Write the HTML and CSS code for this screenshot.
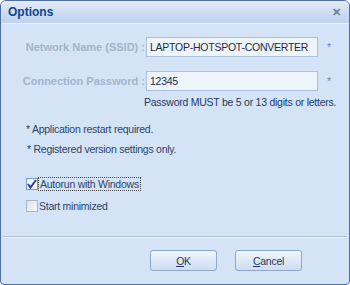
FILE: index.html
```html
<!DOCTYPE html>
<html lang="en">
<head>
    <meta charset="UTF-8">
    <title>Options</title>
    <link rel="stylesheet" href="styles.css">
</head>
<body>
  <div class="window">
    <div class="titlebar">
      <span class="title">Options</span>
      <span class="close">&#x2715;</span>
    </div>
    <div class="content">
      <div class="fields">
        <label class="lbl" for="ssid">Network Name (SSID) :</label>
        <input class="txt" id="ssid" type="text" value="LAPTOP-HOTSPOT-CONVERTER">
        <span class="req">*</span>
        <label class="lbl" for="pass">Connection Password :</label>
        <input class="txt" id="pass" type="text" value="12345">
        <span class="req">*</span>
      </div>
      <p class="hint">Password MUST be 5 or 13 digits or letters.</p>
      <p class="note first">* Application restart required.</p>
      <p class="note second">* Registered version settings only.</p>
      <div class="checks">
        <label class="chk">
          <span class="box checked"><svg width="10" height="10" viewBox="0 0 10 10"><path d="M1 5 L3.5 8.5 L9 1" fill="none" stroke="#2140b0" stroke-width="2"/></svg></span>
          <span class="focus">Autorun with Windows</span>
        </label>
        <label class="chk"><span class="box"></span><span>Start minimized</span></label>
      </div>
      <div class="sep"></div>
      <div class="buttons">
        <button class="btn"><u>O</u>K</button>
        <button class="btn"><u>C</u>ancel</button>
      </div>
    </div>
  </div>
</body>
</html>
```

FILE: styles.css
```css
body{
  margin: 0;
  width: 350px;
  height: 285px;
  background: #ffffff;
  font-family: "Liberation Sans", Arial, sans-serif;
  font-size: 10.5px;
  letter-spacing: -0.25px;
}
.window{
  box-sizing: border-box;
  width: 350px;
  height: 285px;
  border: 1px solid #4d6fa3;
  border-radius: 6px 6px 4px 4px;
  background: #d5e3f7;
  overflow: hidden;
  display: flex;
  flex-direction: column;
}
.titlebar{
  height: 22px;
  display: flex;
  align-items: center;
  justify-content: space-between;
  padding: 0 8px 0 7px;
  background: linear-gradient(#e3ecf8, #c9dbf1 60%, #bfd4ef);
  border-bottom: 1px solid #e8f0fb;
}
.title{
  font-weight: bold;
  font-size: 12px;
  letter-spacing: 0;
  color: #15428b;
}
.close{
  color: #6f7f98;
  font-size: 11px;
  font-weight: bold;
}
.content{
  flex: 1;
  display: flex;
  flex-direction: column;
  padding-top: 13px;
}
.fields{
  display: grid;
  grid-template-columns: 145px 172px auto;
  row-gap: 14px;
  align-items: center;
}
.lbl{
  text-align: right;
  font-weight: bold;
  font-size: 11px;
  letter-spacing: 0;
  color: #a3b4cc;
  padding-right: 1px;
  white-space: nowrap;
}
.txt{
  box-sizing: border-box;
  height: 20px;
  width: 172px;
  border: 1px solid #abc1de;
  background: #eef4fc;
  font-family: inherit;
  font-size: 10.5px;
  letter-spacing: -0.25px;
  color: #1e2c44;
  padding: 0 3px;
  margin: 0;
}
.req{
  padding-left: 9px;
  color: #6e86aa;
}
.hint{
  margin: 5px 0 0 143px;
  color: #1e3a66;
  white-space: nowrap;
}
.note{
  margin: 0;
  color: #2b4468;
}
.first{
  margin: 15px 0 0 25px;
}
.second{
  margin: 8px 0 0 26px;
}
.checks{
  margin: 23px 0 0 25px;
  display: flex;
  flex-direction: column;
  gap: 10px;
}
.chk{
  display: flex;
  align-items: center;
  gap: 1px;
  color: #2b4468;
}
.box{
  box-sizing: border-box;
  width: 12px;
  height: 12px;
  border: 1px solid #a7b6ca;
  background: linear-gradient(135deg, #dfe3e9, #f6f7f9);
  display: flex;
  align-items: center;
  justify-content: center;
}
.checked{
  background: linear-gradient(135deg, #eaf0f9, #ffffff);
  border-color: #7a9ac8;
}
.focus{
  outline: 1px dotted #444;
  padding: 0 1px;
}
.sep{
  margin: 24px 2px 0;
  height: 1px;
  background: #b3bfcf;
  border-bottom: 1px solid #eef3fb;
}
.buttons{
  display: flex;
  justify-content: flex-end;
  gap: 18px;
  margin: 12px 47px 0 0;
}
.btn{
  width: 67px;
  height: 21px;
  border: 1px solid #8ea6c8;
  border-radius: 3px;
  background: linear-gradient(#f1f6fd, #dde8f6 50%, #cfddf1);
  font-family: inherit;
  font-size: 10.5px;
  letter-spacing: -0.25px;
  color: #1e3a66;
  padding: 0;
}
```
